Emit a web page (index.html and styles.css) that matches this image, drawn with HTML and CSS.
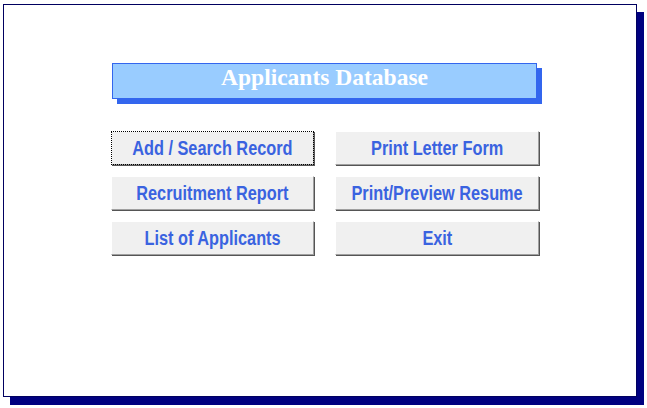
FILE: index.html
```html
<!DOCTYPE html>
<html>
<head>
<meta charset="utf-8">
<link rel="stylesheet" href="styles.css">
</head>
<body>
<div class="panel">
  <div class="title">Applicants Database</div>
  <div class="grid">
    <button class="btn focus"><span class="label">Add / Search Record</span></button>
    <button class="btn"><span class="label">Print Letter Form</span></button>
    <button class="btn"><span class="label">Recruitment Report</span></button>
    <button class="btn"><span class="label">Print/Preview Resume</span></button>
    <button class="btn"><span class="label">List of Applicants</span></button>
    <button class="btn"><span class="label">Exit</span></button>
  </div>
</div>
</body>
</html>
```

FILE: styles.css
```css
html, body {
  margin: 0;
  padding: 0;
  background: #ffffff;
}
body {
  width: 647px;
  height: 408px;
  overflow: hidden;
}
.panel {
  margin: 4px 0 0 3px;
  width: 632px;
  height: 391px;
  border: 1px solid #000060;
  background: #ffffff;
  box-shadow: 7px 8px 0 #000080;
  display: flex;
  flex-direction: column;
  align-items: flex-start;
}
.title {
  margin: 58px 0 0 108px;
  width: 423px;
  height: 34px;
  border: 1px solid #3366ee;
  background: #99ccff;
  box-shadow: 5px 5px 0 #3366ee;
  color: #ffffff;
  font-family: "Liberation Serif", serif;
  font-weight: bold;
  font-size: 23.5px;
  line-height: 26px;
  text-align: center;
}
.grid {
  margin: 32px 0 0 107px;
  display: grid;
  grid-template-columns: 203px 204px;
  column-gap: 21px;
  row-gap: 11px;
}
.btn {
  height: 34px;
  padding: 0;
  margin: 0;
  background: #f0f0f0;
  border-top: 1px solid #ffffff;
  border-left: 1px solid #ffffff;
  border-right: 1px solid #a0a0a0;
  border-bottom: 1px solid #a0a0a0;
  box-shadow: 1px 1px 0 #555555;
  color: #3a63e0;
  font-family: "Liberation Sans", Arial, sans-serif;
  font-weight: bold;
  font-size: 20px;
  text-align: center;
  white-space: nowrap;
  display: flex;
  align-items: center;
  justify-content: center;
}
.label {
  display: inline-block;
  transform: scaleX(0.815);
  line-height: 22px;
}
.focus {
  outline: 1px dotted #000000;
  outline-offset: -1px;
}
```
